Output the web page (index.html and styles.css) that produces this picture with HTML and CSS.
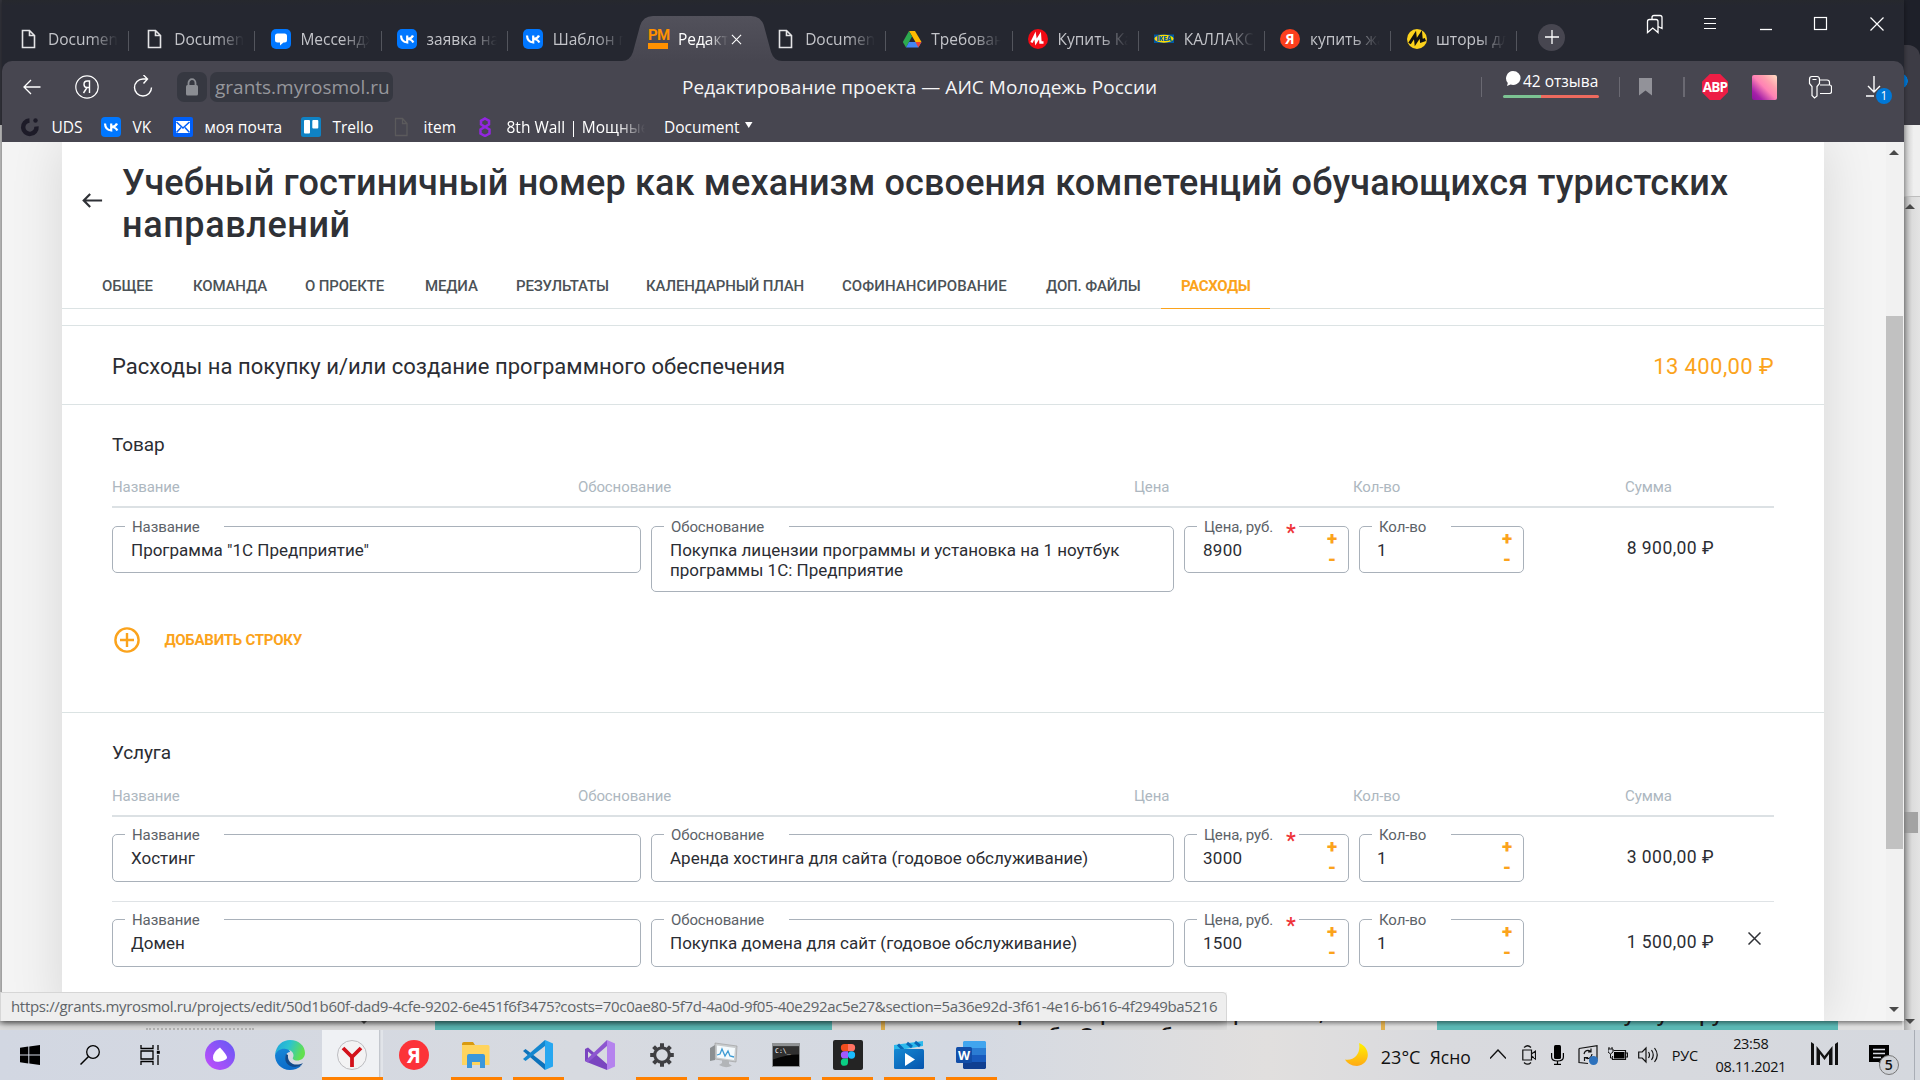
FILE: index.html
```html
<!DOCTYPE html>
<html lang="ru">
<head>
<meta charset="utf-8">
<title>Редактирование проекта — АИС Молодежь России</title>
<link rel="stylesheet" href="styles.css">
</head>
<body>
<div class="desktop">

  <div class="backwin">
    <div class="back-left"></div>
    <div class="back-tabs"></div>
    <div class="back-toolbar"></div>
    <div class="back-scroll"><i class="arrow up"></i><i class="thumb"></i><i class="arrow down"></i></div>
    <div class="back-page">
      <span class="bp-grey"></span>
      <i class="arrow down bp-arrow"></i>
      <span class="bp-teal bp-t1"></span>
      <span class="bp-card"><b class="bp-w1">р</b><b class="bp-w2">р</b><b class="bp-w3">р</b><b class="bp-x1">б</b><b class="bp-x2">З</b><b class="bp-x3">б</b><b class="bp-w4">,</b></span>
      <span class="bp-teal bp-t2"><b class="bp-y1">у</b><b class="bp-y2">у</b><b class="bp-y3">р</b><b class="bp-y4">у</b></span>
    </div>
  </div>

  <div class="window">
    <div class="tabstrip">
      <div class="tabs">
        <div class="tab doc"><svg class="ti" viewBox="0 0 20 20"><path d="M3.500 1.500h7l5 5v12h-12zM10.500 1.500v5h5" fill="none" stroke="#e4e4e6" stroke-width="1.6"/></svg><span>Document</span></div>
        <div class="tab doc"><svg class="ti" viewBox="0 0 20 20"><path d="M3.500 1.500h7l5 5v12h-12zM10.500 1.500v5h5" fill="none" stroke="#e4e4e6" stroke-width="1.6"/></svg><span>Document</span></div>
        <div class="tab"><svg class="ti" viewBox="0 0 20 20"><rect width="20" height="20" rx="5" fill="#07f"/><path d="M6.500 4.500h7q2.500 0 2.500 2.500v4q0 2.500-2.500 2.500h-1L9 16.500v-3H6.500Q4 13.500 4 11V7q0-2.500 2.500-2.500z" fill="#fff"/></svg><span>Мессенджер</span></div>
        <div class="tab"><svg class="ti" viewBox="0 0 20 20"><rect width="20" height="20" rx="5" fill="#07f"/><path d="M4 6.500q.3 6.500 6.200 7V6.500M16 6.500q-1.200 3-5.500 3.500 4.500 .3 5.800 3.500" fill="none" stroke="#fff" stroke-width="2.200"/></svg><span>заявка на грант</span></div>
        <div class="tab last"><svg class="ti" viewBox="0 0 20 20"><rect width="20" height="20" rx="5" fill="#07f"/><path d="M4 6.500q.3 6.500 6.200 7V6.500M16 6.500q-1.200 3-5.500 3.500 4.500 .3 5.800 3.500" fill="none" stroke="#fff" stroke-width="2.200"/></svg><span>Шаблон проекта</span></div>
        <div class="tab active">
          <svg class="tabshape" viewBox="0 0 160 45" preserveAspectRatio="none"><path d="M0 45Q8 45 11 36L18 10Q21 0 31 0H129Q139 0 142 10L149 36Q152 45 160 45z" fill="url(#tg)"/><defs><linearGradient id="tg" x2="0" y2="1"><stop stop-color="#52515b"/><stop offset="1" stop-color="#474650"/></linearGradient></defs></svg>
          <span class="pm"><b>РМ</b><i></i></span><span>Редактирование</span>
          <svg class="tabx" viewBox="0 0 12 12"><path d="M1 1l10 10M11 1L1 11" stroke="#fff" stroke-width="1.200"/></svg>
        </div>
        <div class="tab doc"><svg class="ti" viewBox="0 0 20 20"><path d="M3.500 1.500h7l5 5v12h-12zM10.500 1.500v5h5" fill="none" stroke="#e4e4e6" stroke-width="1.6"/></svg><span>Document</span></div>
        <div class="tab"><svg class="ti" viewBox="0 0 20 20"><path d="M7 2h6l6.500 11h-6z" fill="#ffba00"/><path d="M7 2l3 5.500L4 18.500 .8 13z" fill="#2da94f"/><path d="M7 13h12.500l-3.200 5.500H4z" fill="#4285f4"/><path d="M13.500 13h6l-3.200 5.500z" fill="#ea4335"/></svg><span>Требования</span></div>
        <div class="tab"><svg class="ti" viewBox="0 0 20 20"><circle cx="10" cy="10" r="10" fill="#f20a14"/><path d="M3.500 13.500l3.500-7 1 6.500 4-6.500.5 7h3" fill="none" stroke="#fff" stroke-width="2.400"/></svg><span>Купить Каллакс</span></div>
        <div class="tab"><svg class="ti" viewBox="0 0 20 20"><rect y="5.500" width="20" height="8.500" fill="#0058a3"/><ellipse cx="10" cy="9.750" rx="9.600" ry="3.900" fill="#ffdb00"/><text x="10" y="12.100" font-size="6.500" text-anchor="middle" class="ikea">IKEA</text></svg><span>КАЛЛАКС</span></div>
        <div class="tab"><svg class="ti" viewBox="0 0 20 20"><circle cx="10" cy="10" r="10" fill="#fc3f1d"/><text x="10" y="15" font-size="14" text-anchor="middle" class="ya">Я</text></svg><span>купить жалюзи</span></div>
        <div class="tab"><svg class="ti" viewBox="0 0 20 20"><circle cx="10" cy="10" r="10" fill="#fcd21c"/><path d="M2.500 14.500L8 6l.8 7 5-7.500.6 6.500 4-1.500" fill="none" stroke="#111" stroke-width="3"/></svg><span>шторы для</span></div>
      </div>
      <div class="newtab"><svg viewBox="0 0 14 14"><path d="M7 0v14M0 7h14" stroke="#fff" stroke-width="1.300"/></svg></div>
      <div class="winctl">
        <svg viewBox="0 0 20 20"><path d="M2.500 18.500V7.500q0-2 2-2h6.500q2 0 2 2v11l-5.250-4.500zM7 5.500V3.500q0-2 2-2h6q2 0 2 2V14.500l-4-2" fill="none" stroke="#fff" stroke-width="1.300"/></svg>
        <svg viewBox="0 0 20 20"><path d="M4 4.500h12M4 9.500h12M4 14.500h12" stroke="#fff" stroke-width="1.200"/></svg>
        <svg viewBox="0 0 20 20"><path d="M4 15.500h12" stroke="#fff" stroke-width="1.300"/></svg>
        <svg viewBox="0 0 20 20"><rect x="3.500" y="3.500" width="12" height="12" fill="none" stroke="#fff" stroke-width="1.200"/></svg>
        <svg viewBox="0 0 20 20"><path d="M3.500 3.500l13 13M16.500 3.500l-13 13" stroke="#fff" stroke-width="1.200"/></svg>
      </div>
    </div>

    <div class="toolbar">
      <div class="navbar">
        <div class="navicons">
          <svg viewBox="0 0 24 24"><path d="M20.500 12H4M11 5l-7 7 7 7" fill="none" stroke="#fff" stroke-width="1.300"/></svg>
          <svg viewBox="0 0 24 24"><circle cx="12" cy="12" r="11.200" fill="none" stroke="#fff" stroke-width="1.200"/><path d="M14.500 18V6h-2.300Q9 6 9 9.200t3 3.300h2.500M12 12.500L8.500 18" fill="none" stroke="#fff" stroke-width="1.400"/></svg>
          <svg viewBox="0 0 24 24"><path d="M20.500 12.500A8.500 8.500 0 1 1 12 4h4M12.500 0L16.500 4l-4 4.500" fill="none" stroke="#fff" stroke-width="1.400"/></svg>
        </div>
        <div class="lock"><svg viewBox="0 0 14 18"><rect x="1" y="7" width="12" height="10.500" rx="1.500" fill="#8b8d93"/><path d="M3.500 8V5a3.500 3.800 0 0 1 7 0v3" fill="none" stroke="#8b8d93" stroke-width="1.800"/></svg></div>
        <div class="url"><span>grants.myrosmol.ru</span></div>
        <div class="pagetitle"><span>Редактирование проекта — АИС Молодежь России</span></div>
        <i class="vsep"></i>
        <div class="reviews"><div><svg viewBox="0 0 16 16"><path d="M8 0a7.500 7 0 1 1-2.500 13.600L2 15l.8-3A7.300 7.300 0 0 1 8 0z" fill="#fff"/></svg><span>42 отзыва</span></div><i></i></div>
        <i class="vsep"></i>
        <svg class="bm" viewBox="0 0 14 18"><path d="M0 0h13v17.500L6.500 12.500 0 17.500z" fill="#929299"/></svg>
        <i class="vsep v3"></i>
        <svg class="abp" viewBox="0 0 26 26"><path d="M7.800 0h10.400L26 7.800v10.400L18.200 26H7.800L0 18.200V7.800z" fill="#ed1e45"/><text x="13" y="17.700" text-anchor="middle">ABP</text></svg>
        <div class="pix"></div>
        <svg class="key" viewBox="0 0 24 24"><path d="M4 1.500h5q2.500 0 2.500 3v4l-2.500 3v9.500L6.500 23 4 20.500v-9L1.500 8.500v-4q0-3 2.500-3zM4.500 4.500h4M12 5h7q2.500 0 2.500 2.500V10q2 0 2 2v4.500q0 2-2 2H12M12 10h9.500" fill="none" stroke="#fff" stroke-width="1.200"/></svg>
        <div class="dl"><svg viewBox="0 0 16 22"><path d="M8 0v16M2 10l6 6 6-6M0 20h8" fill="none" stroke="#fff" stroke-width="1.400"/></svg><b>1</b></div>
      </div>
      <div class="bookmarks">
        <div class="bk b1"><svg viewBox="0 0 20 20"><path d="M9.500 3.500a6.700 6.700 0 1 0 7 6" fill="none" stroke="#1d1b28" stroke-width="4.500"/><circle cx="15.500" cy="3.500" r="2.200" fill="#1d1b28"/></svg><span>UDS</span></div>
        <div class="bk b2"><svg viewBox="0 0 20 20"><rect width="20" height="20" rx="4" fill="#07f"/><path d="M4 6.500q.3 6.500 6.200 7V6.500M16 6.500q-1.200 3-5.500 3.500 4.500 .3 5.800 3.500" fill="none" stroke="#fff" stroke-width="2.200"/></svg><span>VK</span></div>
        <div class="bk b3"><svg viewBox="0 0 20 20"><rect width="20" height="20" rx="2" fill="#005ff9"/><rect x="3" y="4" width="14" height="12" fill="#fff"/><path d="M3.500 5l6.500 6 6.500-6M3.500 15.500L8 10.500M16.500 15.500L12 10.500" fill="none" stroke="#005ff9" stroke-width="1.500"/></svg><span>моя почта</span></div>
        <div class="bk b4"><svg viewBox="0 0 20 20"><rect width="20" height="20" rx="2.500" fill="#0f82c4"/><rect x="3" y="3" width="6" height="13.500" rx="1" fill="#fff"/><rect x="11.300" y="3" width="6" height="8.500" rx="1" fill="#fff"/></svg><span>Trello</span></div>
        <div class="bk b5"><svg viewBox="0 0 20 20"><path d="M3.500 1.500h7l4.500 5v12H3.500zM10.500 1.500v5h5" fill="none" stroke="#5b5a5c" stroke-width="1.300"/></svg><span>item</span></div>
        <div class="bk b6"><svg viewBox="0 0 20 20"><path d="M10 1.500l4 2.300v3.500L10 10 6 7.300V3.800zM10 10l4.500 2.500v4L10 19l-4.500-2.500v-4z" fill="none" stroke="#9226e0" stroke-width="2.500"/></svg><span>8th Wall | Мощные</span></div>
        <div class="bk b7"><span>Document</span><svg class="tri" viewBox="0 0 8 6"><path d="M0 0h7.500L3.750 6z" fill="#fff"/></svg></div>
      </div>
    </div>

    <div class="viewport">
      <div class="page">
        <header class="head">
          <svg viewBox="0 0 24 16"><path d="M23 8H3M10 1L3 8l7 7" fill="none" stroke="#2f3136" stroke-width="2.400"/></svg>
          <h1><span>Учебный гостиничный номер как механизм освоения компетенций обучающихся туристских</span><br><span>направлений</span></h1>
        </header>
        <nav class="sections">
          <a class="s1">ОБЩЕЕ</a><a class="s2">КОМАНДА</a><a class="s3">О ПРОЕКТЕ</a><a class="s4">МЕДИА</a><a class="s5">РЕЗУЛЬТАТЫ</a><a class="s6">КАЛЕНДАРНЫЙ ПЛАН</a><a class="s7">СОФИНАНСИРОВАНИЕ</a><a class="s8">ДОП. ФАЙЛЫ</a><a class="s9 on">РАСХОДЫ</a>
        </nav>
        <div class="total"><h2>Расходы на покупку и/или создание программного обеспечения</h2><span>13 400,00 ₽</span></div>

        <section class="group first">
          <h3>Товар</h3>
          <div class="cols"><span>Название</span><span>Обоснование</span><span>Цена</span><span>Кол-во</span><span>Сумма</span></div>
          <div class="row">
            <div class="field"><label>Название</label><p>Программа "1С Предприятие"</p></div>
            <div class="field tall"><label>Обоснование</label><p>Покупка лицензии программы и установка на 1 ноутбук<br>программы 1С: Предприятие</p></div>
            <div class="field num"><label>Цена, руб.<em>*</em></label><p>8900</p><i class="pm-ctl"><b>+</b><b>-</b></i></div>
            <div class="field num qty"><label>Кол-во</label><p>1</p><i class="pm-ctl"><b>+</b><b>-</b></i></div>
            <div class="sum">8 900,00 ₽</div>
          </div>
          <div class="add"><svg viewBox="0 0 26 26"><circle cx="13" cy="13" r="11.600" fill="none" stroke="#fba31c" stroke-width="2.400"/><path d="M13 6v14M6 13h14" stroke="#fba31c" stroke-width="2.400"/></svg><span>ДОБАВИТЬ СТРОКУ</span></div>
        </section>

        <section class="group second">
          <h3>Услуга</h3>
          <div class="cols"><span>Название</span><span>Обоснование</span><span>Цена</span><span>Кол-во</span><span>Сумма</span></div>
          <div class="row">
            <div class="field"><label>Название</label><p>Хостинг</p></div>
            <div class="field"><label>Обоснование</label><p>Аренда хостинга для сайта (годовое обслуживание)</p></div>
            <div class="field num"><label>Цена, руб.<em>*</em></label><p>3000</p><i class="pm-ctl"><b>+</b><b>-</b></i></div>
            <div class="field num qty"><label>Кол-во</label><p>1</p><i class="pm-ctl"><b>+</b><b>-</b></i></div>
            <div class="sum">3 000,00 ₽</div>
          </div>
          <div class="row next">
            <div class="field"><label>Название</label><p>Домен</p></div>
            <div class="field"><label>Обоснование</label><p>Покупка домена для сайт (годовое обслуживание)</p></div>
            <div class="field num"><label>Цена, руб.<em>*</em></label><p>1500</p><i class="pm-ctl"><b>+</b><b>-</b></i></div>
            <div class="field num qty"><label>Кол-во</label><p>1</p><i class="pm-ctl"><b>+</b><b>-</b></i></div>
            <div class="sum">1 500,00 ₽</div>
            <svg class="del" viewBox="0 0 13 13"><path d="M.5 .5l12 12M12.500 .5l-12 12" stroke="#2f3136" stroke-width="1.500"/></svg>
          </div>
        </section>
      </div>
      <div class="scrollbar"><i class="arrow up"></i><i class="thumb"></i><i class="arrow down"></i></div>
    </div>
  </div>

  <div class="status"><span>https://grants.myrosmol.ru/projects/edit/50d1b60f-dad9-4cfe-9202-6e451f6f3475?costs=70c0ae80-5f7d-4a0d-9f05-40e292ac5e27&amp;section=5a36e92d-3f61-4e16-b616-4f2949ba5216</span></div>

  <div class="taskbar">
    <div class="tb sys"><svg width="20" height="20" viewBox="0 0 20 20"><path d="M0 2.800L8.300 1.600v7.900H0zM9.300 1.500L20 0v9.500H9.300zM0 10.500h8.300v7.900L0 17.200zM9.300 10.500H20V20L9.300 18.500z"/></svg></div>
    <div class="tb sys"><svg width="20" height="20" viewBox="0 0 20 20"><circle cx="13" cy="7" r="6.300" fill="none" stroke="#000" stroke-width="1.300"/><path d="M8.500 11.500L.5 19.500" stroke="#000" stroke-width="1.500"/></svg></div>
    <div class="tb sys"><svg width="20" height="20" viewBox="0 0 20 20"><path d="M1 0v3.500h12V0M1 20v-3.500h12V20M1 6h12v8H1zM18 0v5M18 10v10" fill="none" stroke="#000" stroke-width="1.300"/><rect x="16.800" y="5.800" width="3" height="3"/></svg></div>
    <div class="tb alice"><svg width="30" height="30" viewBox="0 0 30 30"><defs><linearGradient id="al" x1="0" y1="1" x2="1" y2="0"><stop stop-color="#c54dfb"/><stop offset="1" stop-color="#6259f5"/></linearGradient></defs><circle cx="15" cy="15" r="15" fill="url(#al)"/><path d="M15 7.500Q22 15 22 17.500T15 21.500 8 17.500 15 7.500z" fill="#fff"/></svg></div>
    <div class="tb edge"><svg width="30" height="30" viewBox="0 0 30 30"><defs><linearGradient id="e1" x1="0" x2="1" y2=".3"><stop stop-color="#1fa2dd"/><stop offset=".5" stop-color="#2cc3d0"/><stop offset="1" stop-color="#62e050"/></linearGradient><linearGradient id="e2" x2=".3" y2="1"><stop stop-color="#1887d8"/><stop offset="1" stop-color="#0b6cc9"/></linearGradient></defs><path d="M0 15C1 5 8 0 15 0c9 0 15 6 15 13 0 5-4 7.500-8 7.500-3 0-5-1.500-4-3 1.500-2.500 0-7-5-7.500C8 9.500 2 11 0 15z" fill="url(#e1)"/><path d="M0 15c2-5 7-7 11-6 3 .5 4 2 4 3-4 0-6 6-3 10s9 6 15 3c-4 4-8 5-12 5C6 30 0 23 0 15z" fill="url(#e2)"/><path d="M11 14c-3 7 2 13 9 13 3 0 6-1 8-4-8 4-16 0-15-8z" fill="#114a8b"/></svg></div>
    <div class="tb on run"><svg width="30" height="30" viewBox="0 0 30 30"><circle cx="15" cy="15" r="14.500" fill="#f3f3f4" stroke="#bcbcc0"/><path d="M6 8l9 9v10M24 8l-9 9" fill="none" stroke="#d3121b" stroke-width="3.800"/></svg></div>
    <div class="tb"><svg width="30" height="30" viewBox="0 0 30 30"><circle cx="15" cy="15" r="15" fill="#fc3338"/><text x="15" y="22.500" font-size="21" text-anchor="middle" class="ya">Я</text></svg></div>
    <div class="tb run"><svg width="28" height="26" viewBox="0 0 28 26"><path d="M0 2q0-2 2-2h9l2 3h-13z" fill="#d99a10"/><path d="M0 3h26q1.500 0 1.500 1.500V23H0z" fill="#ffd45e"/><path d="M5 26V14q0-2 2-2h14q2 0 2 2v12h-5v-6h-8v6z" fill="#3a97dc"/></svg></div>
    <div class="tb run"><svg width="30" height="30" viewBox="0 0 30 30"><path d="M0 11l2.500-2L22 24v6L0 11z" fill="#0d72ba"/><path d="M0 19l2.500 2L22 6V0z" fill="#1487cf"/><path d="M22 0l8 3.500v23L22 30z" fill="#27a7f0"/></svg></div>
    <div class="tb"><svg width="30" height="30" viewBox="0 0 30 30"><path d="M0 9l3-1.500L22 24v6L3 22.500 0 21zM3 11.500v7L7 15z" fill="#7a45c0" fill-rule="evenodd"/><path d="M22 0v6L3 22.500 0 21 22 0z" fill="#8d56d0"/><path d="M22 0l8 3.500v23L22 30z" fill="#b583ee"/></svg></div>
    <div class="tb run"><svg width="24" height="24" viewBox="-12 -12 24 24"><circle r="7.300" fill="none" stroke="#3f3f42" stroke-width="3"/><g stroke="#3f3f42" stroke-width="4"><path d="M0-8v-3.800M0 8v3.800M8 0h3.800M-8 0h-3.800M5.700-5.700l2.700-2.700M-5.700 5.700l-2.700 2.700M5.700 5.700l2.700 2.700M-5.700-5.700l-2.700-2.700"/></g></svg></div>
    <div class="tb run"><svg width="28" height="26" viewBox="0 0 28 26"><path d="M0 6l5-3v15l-5 1z" fill="#8b8f92"/><path d="M5 1l22 3-1 16L5 17z" fill="#c9ccce" stroke="#999" stroke-width=".6"/><path d="M7 3.500l18 2.500-1 12L7 15.500z" fill="#f4fafd"/><path d="M7 13l3-1 2-5 3 7 3-5 2 5 4 1" fill="none" stroke="#3c9bd4" stroke-width="1.300"/><path d="M12 18l7 1v3l3 1.500q-6 3.500-13-.5l3-2z" fill="#b2b5b8"/></svg></div>
    <div class="tb run"><svg width="28" height="24" viewBox="0 0 28 24"><rect width="28" height="24" fill="#8f9294"/><rect x="1" y="3.500" width="26" height="19.500" fill="#050505"/><path d="M1 3.500h26v8q-12 0-26 5z" fill="#303030"/><text x="3" y="9.500" font-size="6.500" class="cmd">C:\_</text></svg></div>
    <div class="tb run"><svg width="30" height="30" viewBox="0 0 30 30"><rect width="30" height="30" rx="2" fill="#242424"/><path d="M15 4h-3.500a3.600 3.600 0 0 0 0 7.300H15z" fill="#f24e1e"/><path d="M15 4h3.500a3.600 3.600 0 0 1 0 7.300H15z" fill="#ff7262"/><path d="M15 11.300h-3.500a3.600 3.600 0 0 0 0 7.300H15z" fill="#a259ff"/><circle cx="18.500" cy="15" r="3.650" fill="#1abcfe"/><path d="M15 18.600h-3.500a3.600 3.600 0 1 0 3.500 3.600z" fill="#0acf83"/></svg></div>
    <div class="tb run"><svg width="30" height="30" viewBox="0 0 30 30"><defs><linearGradient id="mv" x2="1" y2="1"><stop stop-color="#1489d3"/><stop offset="1" stop-color="#0754ad"/></linearGradient></defs><path d="M0 5L29 1v5L0 11z" fill="#2cb9ec"/><path d="M4 4.500l5 5M13 3l5 4M21 2l5 4" stroke="#0869b7" stroke-width="3"/><rect y="9" width="30" height="20" rx="1.500" fill="url(#mv)"/><path d="M11 13v13l10-6.500z" fill="#fff"/></svg></div>
    <div class="tb run"><svg width="30" height="28" viewBox="0 0 30 28"><path d="M8 0h21l1 1v6H7V1z" fill="#41a5ee"/><path d="M7 7h23v7H7z" fill="#2b7cd3"/><path d="M7 14h23v7H7z" fill="#185abd"/><path d="M7 21h23v6l-1 1H8l-1-1z" fill="#103f91"/><rect y="6" width="16" height="16" rx="1.500" fill="#124ea8"/><text x="8" y="18.500" font-size="12.500" text-anchor="middle" class="ya">W</text></svg></div>

    <div class="tray">
      <svg class="moon" viewBox="0 0 23 23"><defs><linearGradient id="mo" x2="0" y2="1"><stop stop-color="#fff200"/><stop offset="1" stop-color="#ffa915"/></linearGradient></defs><path d="M14 0C27 5 25 22 12 23 6 23 2 20 0 16.500 10 18 16 10 14 0z" fill="url(#mo)"/></svg>
      <span class="temp">23°C</span><span class="sky">Ясно</span>
      <svg class="chev" viewBox="0 0 16 10"><path d="M0 9.500L8 1l8 8.500" fill="none" stroke="#111" stroke-width="1.400"/></svg>
      <svg class="cam" viewBox="0 0 14 20"><path d="M2 2.500Q5.500-1 9 2.500M2 17.500q3.500 3.500 7 0M.8 5h8.700v10H.8zM9.500 9l4-3v8l-4-3" fill="none" stroke="#111" stroke-width="1.200"/></svg>
      <svg class="mic" viewBox="0 0 13 20"><rect x="3" width="7" height="14" rx="1.500"/><path d="M.6 8v4q0 4 5.900 4t5.900-4V8M6.500 16v3M3 19.400h7" fill="none" stroke="#000" stroke-width="1.200"/></svg>
      <svg class="sync" viewBox="0 0 20 20"><path d="M1 3.500L19 .7v14M1 3.500v14l9 1" fill="none" stroke="#111" stroke-width="1.200"/><path d="M6 9q1-4 5-3.500l2 1M13 3.500v3.300h-3M14 9q-1 5-5 4.500l-2-1M6.500 16v-3.500H10" fill="none" stroke="#111" stroke-width="1.200"/><circle cx="15.500" cy="15.500" r="4.500" fill="#2d72bd"/></svg>
      <svg class="bat" viewBox="0 0 20 14"><path d="M5.500 3.500h12v9h-13V9M17.500 6H19.500v4h-2" fill="none" stroke="#111" stroke-width="1.200"/><rect x="6" y="5" width="10.500" height="6.500"/><path d="M1 0v2M4 0v2M0 2h5v3L2.500 7 0 5zM2.500 7v4h2" fill="#d5d8e0" stroke="#111"/></svg>
      <svg class="spk" viewBox="0 0 21 18"><path d="M.7 6h3.500L8 2v14l-3.800-4H.7zM10.500 6q2 3 0 6M13.500 4q3.500 5 0 10M16.500 2q5.500 7 0 14" fill="none" stroke="#111" stroke-width="1.200"/></svg>
      <span class="lang">РУС</span>
      <div class="clock"><span>23:58</span><span>08.11.2021</span></div>
      <svg class="mm" viewBox="0 0 27 23"><path d="M0 0l3 2v21H0zM27 0l-3 2v21h3zM5.500 4L13.500 14 21.500 4v19h-3.500V12L13.500 18 9 12v11H5.500z" fill="#111"/></svg>
      <div class="notif"><svg viewBox="0 0 20 22"><path d="M0 0h20v17h-6v4.500L9.500 17H0z"/><path d="M4 4.500h12M4 8.500h12M4 12.500h8" stroke="#d5d8e0" stroke-width="1.400"/></svg><b>5</b></div>
    </div>
    <i class="peek"></i>
  </div>
</div>
</body>
</html>
```
FILE: styles.css
```css
* { box-sizing: border-box; }
body { margin: 0; background: #d5d8e0; }
.desktop { position: relative; width: 1920px; height: 1080px; overflow: hidden; font-family: "Open Sans", "Noto Sans", sans-serif; }
svg { display: block; flex: none; }
i { font-style: normal; }
h1, h2, h3, p { margin: 0; font-weight: 400; }

/* window that lies behind the main one */
.backwin { position: absolute; inset: 0 0 50px 0; background: #e2e2e2; }
.back-left { position: absolute; left: 0; top: 0; width: 2px; height: 1030px; background: linear-gradient(#34353d 125px, #c8c8c8 125px); }
.back-tabs { position: absolute; right: 0; top: 0; width: 30px; height: 60px; background: #1e2029; }
.back-toolbar { position: absolute; right: 0; top: 45px; width: 16px; height: 80px; background: radial-gradient(circle 8px at -4px 36px, #0078d7 7.500px, transparent 8px), #3d3c45; border-radius: 0 12px 0 0; }
.back-scroll { position: absolute; right: 0; top: 125px; width: 16px; height: 905px; background: linear-gradient(90deg, #a8a8a8, #dcdcdc 50%, #e4e4e4); }
.back-scroll::before { content: ""; display: block; height: 71px; background: linear-gradient(90deg, #c4c4c4, #efefef 60%); border-bottom: 1px solid #bdbdbd; }
.back-scroll .thumb { position: absolute; left: 0; top: 687px; width: 14px; height: 21px; background: #a3a3a3; }
.arrow { position: absolute; width: 0; height: 0; border: 5px solid transparent; }
.arrow.up { border-top: 0; border-bottom-color: #4a4a4a; }
.arrow.down { border-bottom: 0; border-top-color: #4a4a4a; }
.back-scroll .up { left: 1px; top: 79px; }
.back-scroll .down { left: 1px; bottom: 6px; }
.back-page { position: absolute; left: 0; top: 1021px; width: 1902px; height: 9px; overflow: hidden; background: linear-gradient(#bcbcbc, #dedede 60%); font: 20px/22px "Open Sans", sans-serif; }
.back-page span { position: absolute; top: 0; height: 9px; overflow: hidden; }
.back-page b { position: absolute; color: #1c1c1c; font-weight: 600; }
.bp-arrow { left: 359px; top: -2px; }
.bp-grey { left: 146px; top: 7px !important; width: 108px; border-top: 2px dotted #b5b5b5; }
.bp-teal { background: linear-gradient(#4c9f9c, #5bb8b4 60%); }
.bp-t1 { left: 435px; width: 397px; }
.bp-t2 { left: 1437px; width: 401px; }
.bp-card { left: 881px; width: 504px; border: solid #e0b04f; border-width: 0 4px; }
.bp-w1, .bp-w2, .bp-w3, .bp-w4 { top: -19px; }
.bp-w1 { left: 132px; } .bp-w2 { left: 215px; } .bp-w3 { left: 348px; } .bp-w4 { left: 434px; }
.bp-x1, .bp-x2, .bp-x3 { top: 3px; }
.bp-x1 { left: 163px; } .bp-x2 { left: 196px; } .bp-x3 { left: 275px; }
.bp-y1, .bp-y2, .bp-y3, .bp-y4 { top: -18px; }
.bp-y1 { left: 187px; } .bp-y2 { left: 220px; } .bp-y3 { left: 262px; } .bp-y4 { left: 275px; }

/* browser window */
.window { position: absolute; left: 2px; top: 0; width: 1902px; height: 1021px; display: flex; flex-direction: column; background: #252730; box-shadow: 0 1px 5px rgba(0,0,0,.45); }
.tabstrip { height: 61px; display: flex; background: linear-gradient(#26282d, #252730 6px); }
.tabs { display: flex; padding-left: 1px; height: 61px; }
.tab { position: relative; width: 126.200px; height: 61px; display: flex; align-items: center; padding: 17px 0 0 15.500px; color: #c3c4c9; font-size: 15.500px; line-height: 20px; }
.tab::after { content: ""; position: absolute; right: 0; top: 31px; width: 1px; height: 20px; background: #53555d; }
.tab.last::after, .tab.active::after { display: none; }
.ti { width: 20px; height: 20px; margin-right: 9.500px; }
.tab > span:not(.pm) { width: 70px; overflow: hidden; white-space: nowrap; -webkit-mask-image: linear-gradient(90deg, #000 60%, transparent); mask-image: linear-gradient(90deg, #000 60%, transparent); }
.tab.active { color: #fff; z-index: 1; padding-left: 14px; }
.tab.active > span:not(.pm) { width: 50px; position: relative; }
.tabshape { position: absolute; left: -12px; top: 16px; width: 160px; height: 45px; }
.pm { position: relative; width: 20px; height: 20px; margin-right: 10px; }
.pm b { display: block; height: 12px; font: 700 15px/12px Roboto, sans-serif; color: #ff9100; letter-spacing: -.5px; }
.pm i { display: block; height: 6px; margin-top: 2px; background: #ff9100; }
.tabx { position: relative; width: 11px; height: 11px; margin-left: 3px; }
.ikea { font: 900 6.500px "Open Sans"; fill: #0058a3; }
.ya { font-family: "Open Sans"; font-weight: 700; fill: #fff; }
.cmd { font-family: "DejaVu Sans Mono"; fill: #fff; }
.newtab { width: 27px; height: 27px; margin: 23.500px 0 0 21px; border-radius: 50%; background: #474650; display: grid; place-items: center; }
.newtab svg { width: 14px; height: 14px; }
.winctl { display: flex; gap: 35.500px; margin: 14px 0 0 auto; padding-right: 17.500px; }
.winctl svg { width: 20px; height: 20px; }

.toolbar { height: 81px; background: #474650; border-radius: 10px 10px 0 0; }
.navbar { height: 52px; display: flex; align-items: center; }
.navicons { display: flex; gap: 31.500px; width: 175px; padding-left: 17.500px; }
.navicons svg { width: 24px; height: 24px; }
.lock, .url { height: 30px; border-radius: 7px; background: #363841; display: flex; align-items: center; }
.lock { width: 30px; justify-content: center; margin-right: 3px; }
.lock svg { width: 14px; height: 18px; }
.url { width: 183px; padding-left: 5px; color: #96979c; font-size: 19px; line-height: 26px; }
.pagetitle { width: 1088px; padding-left: 289px; color: #f5f5f6; font-size: 19px; line-height: 26px; letter-spacing: .04px; white-space: nowrap; }
.vsep { width: 1px; height: 20px; background: #6a6972; }
.v3 { width: 2px; }
.reviews { width: 96px; margin: -5px 20px 0 21px; color: #fff; font-size: 15.500px; line-height: 20px; }
.reviews div { display: flex; white-space: nowrap; padding-left: 2px; height: 24px; }
.reviews svg { width: 16px; height: 16px; margin-right: 2px; }
.reviews i { display: block; height: 3px; border-radius: 2px; background: linear-gradient(90deg, #7cc393 40%, #ed6a5e 40%); }
.bm { width: 14px; height: 18px; margin: 0 30px 0 19px; }
.abp { width: 26px; height: 26px; margin-left: 16.500px; }
.abp text { font: 700 13.500px "Open Sans"; fill: #fff; letter-spacing: -.8px; }
.pix { width: 25px; height: 25px; margin-left: 24px; border-radius: 2px; background: linear-gradient(225deg, #ffe0c4, #ff9fae 30%, #ff82b5 50%, #a521a8 80%, #8a159c); }
.key { width: 24px; height: 24px; margin-left: 31px; }
.dl { position: relative; margin-left: 34.500px; }
.dl svg { width: 16px; height: 22px; }
.dl b { position: absolute; left: 10px; top: 12px; width: 16px; height: 16px; border-radius: 50%; background: #0078d7; color: #fff; font: 12px/16px "Open Sans"; text-align: center; }
.bookmarks { height: 29px; display: flex; padding: 4px 0 0 18px; color: #fff; font-size: 15.500px; line-height: 20px; white-space: nowrap; }
.bk { display: flex; height: 20px; }
.bk svg { width: 20px; height: 20px; margin-right: 11.500px; }
.b1 { width: 81px; } .b2 { width: 72px; } .b3 { width: 128px; } .b4 { width: 91px; } .b5 { width: 83px; } .b6 { width: 189px; }
.b6 span { width: 138px; overflow: hidden; -webkit-mask-image: linear-gradient(90deg, #000 80%, transparent); mask-image: linear-gradient(90deg, #000 80%, transparent); }
.bk svg.tri { width: 8px; height: 6px; margin: 5px 0 0 5px; }

/* page */
.viewport { flex: 1; min-height: 0; display: flex; background: #f4f4f4; overflow: hidden; }
.page { position: relative; margin-left: 60px; width: 1762px; background: #fff; color: #2b2d33; box-shadow: 0 0 50px rgba(0,0,0,.12); font-family: Roboto, "Liberation Sans", sans-serif; }
.scrollbar { position: relative; margin-left: auto; width: 18px; background: #f1f1f1; }
.scrollbar .thumb { position: absolute; left: 0; top: 174px; width: 17px; height: 533px; background: #c1c1c1; }
.scrollbar .up { left: 3px; top: 8px; }
.scrollbar .down { left: 3px; bottom: 9px; }
.head { display: flex; height: 119px; padding: 20px 0 0 19px; }
.head svg { width: 22px; height: 15px; margin: 31px 19px 0 0; }
h1 { font-size: 36px; line-height: 42px; font-weight: 500; color: #2f3136; letter-spacing: .15px; white-space: nowrap; }
h1 span + br + span { letter-spacing: .6px; }
.sections { display: flex; height: 48px; padding-left: 20px; border-bottom: 1px solid #dce3e4; font-size: 15px; line-height: 20px; font-weight: 500; color: #4b5257; letter-spacing: -.15px; white-space: nowrap; }
.sections a { height: 48px; padding: 15px 0 0 20px; }
.s1 { width: 91px; } .s2 { width: 112px; } .s3 { width: 120px; } .s4 { width: 91px; } .s5 { width: 130px; } .s6 { width: 196px; } .s7 { width: 204px; letter-spacing: .08px; } .s8 { width: 135px; } .s9 { width: 109px; }
.sections .on { color: #fba31c; border-bottom: 1px solid #fba31c; font-weight: 700; letter-spacing: -.35px; }
.total { display: flex; justify-content: space-between; margin-top: 16px; height: 80px; padding: 26px 50px 0; border: solid #dce3e4; border-width: 1px 0; font-size: 22px; line-height: 30px; white-space: nowrap; }
.total h2 { font-size: 22px; letter-spacing: .03px; }
.total span { color: #fba31c; letter-spacing: .4px; }
.group { padding: 0 50px; height: 308px; border-bottom: 1px solid #dbe3e3; }
.group h3 { padding-top: 28px; height: 71px; font-size: 19px; line-height: 24px; letter-spacing: -.1px; }
.first h3 { height: 70px; }
.cols { display: grid; grid-template-columns: 466px 556px 219px 272px 1fr; height: 33px; padding-top: 2px; border-bottom: 2px solid #dce1e4; color: #adb7c0; font-size: 15px; line-height: 20px; letter-spacing: -.1px; }
.row { display: flex; align-items: flex-start; padding-top: 18px; height: 85px; }
.field { position: relative; width: 529px; height: 48px; border: 1px solid #a9b1ba; border-radius: 5px; margin-right: 10px; }
.first .field { height: 47px; }
.field + .field { width: 523px; }
.first .field.tall { height: 66px; }
.field + .num { width: 165px; margin-right: 10px; }
.field label { position: absolute; left: 12px; top: -10px; height: 20px; width: 99px; padding-left: 7px; background: #fff; color: #5c6268; font-size: 15px; line-height: 20px; letter-spacing: -.1px; white-space: nowrap; }
.field + .field label { width: 125px; }
.field + .num label { width: 102px; }
.field + .qty label { width: 79px; }
.field em { position: absolute; left: 89px; top: 5px; font: 500 22px/22px Roboto; color: #ee3338; }
.field p { padding: 13px 0 0 18px; font-size: 17px; line-height: 20px; white-space: nowrap; }
.num p { letter-spacing: .3px; }
.qty p { padding-left: 17px; }
.pm-ctl { position: absolute; right: 9px; top: 1px; width: 14px; color: #fba31c; font: 700 19px/21px Roboto; text-align: center; }
.pm-ctl b { display: block; }
.sum { width: 180px; padding-top: 12px; text-align: right; font-size: 17.500px; line-height: 20px; letter-spacing: .45px; white-space: nowrap; }
.second .sum { padding-top: 13px; }
.add { display: flex; align-items: center; margin-top: 34px; gap: 25px; height: 26px; padding-left: 1.500px; color: #fba31c; font-size: 15px; font-weight: 700; letter-spacing: -.25px; }
.add svg { width: 26px; height: 26px; }
.second { border: 0; }
.next { border-top: 1px solid #dfe3e6; padding-top: 17px; }
.second .row:not(.next) { height: 84px; padding-top: 17px; }
.del { width: 13px; height: 13px; margin: 13px 0 0 34px; }

.status { position: absolute; left: 0; top: 992px; width: 1227px; height: 29px; background: #eee; border: 1px solid #d6d6d6; border-bottom: 0; border-radius: 0 5px 0 0; box-shadow: 0 3px 8px rgba(0,0,0,.3); clip-path: inset(0 0 -9px 0); padding-left: 10px; color: #606468; font-size: 15px; letter-spacing: -.33px; line-height: 27px; white-space: nowrap; }

/* taskbar */
.taskbar { position: absolute; left: 0; bottom: 0; width: 1920px; height: 50px; display: flex; background: linear-gradient(90deg, #d2d7e2, #d7dae0 30%, #d4d9e2 50%, #e1dfde 66%, #d9dade 75%, #d5d8de 100%); }
.tb { width: 61.900px; height: 50px; display: grid; place-items: center; position: relative; }
.sys { width: 60px; }
.alice { width: 70px; margin-left: 5px; }
.edge { width: 66.500px; padding-left: 3px; }
.on.tb { background: linear-gradient(90deg, #eff1f4 57px, #b9bdc4 57px, #e1e4e9 59px); }
.run::after { content: ""; position: absolute; left: 5.500px; right: 5.500px; bottom: 0; height: 3px; background: #ff8000; }
.on.run::after { left: 0; right: 0; }
.tray { display: flex; margin-left: 342.500px; color: #111; }
.tray > * { margin-top: 15px; }
.tray .moon { width: 23px; height: 23px; margin: 13px 13px 0 0; }
.temp { width: 49px; font-size: 18px; line-height: 24px; }
.sky { width: 60px; font-size: 17.500px; line-height: 24px; }
.tray .chev { width: 16px; height: 10px; margin: 19px 16px 0 0; }
.tray .cam { width: 14px; height: 20px; margin-right: 15px; }
.tray .mic { width: 13px; height: 20px; margin-right: 14px; }
.tray .sync { width: 20px; height: 20px; margin-right: 10px; }
.tray .bat { width: 20px; height: 14px; margin: 17px 10px 0 0; }
.tray .spk { width: 21px; height: 18px; margin: 16px 13px 0 0; }
.lang { width: 35px; font-size: 14.500px; line-height: 22px; letter-spacing: -.3px; }
.tray .clock { width: 88px; margin-top: 2px; display: flex; flex-direction: column; align-items: center; font-size: 14.500px; line-height: 23px; letter-spacing: -.35px; }
.tray .mm { width: 27px; height: 23px; margin: 12px 31px 0 16px; }
.notif { position: relative; }
.notif svg { width: 20px; height: 22px; }
.notif b { position: absolute; left: 10px; top: 10px; width: 20px; height: 20px; border: 1px solid #777; border-radius: 50%; background: #cfd2d7; font: 600 14px/18px "Open Sans"; text-align: center; }
.peek { position: absolute; right: 5px; top: 0; width: 1px; height: 50px; background: #a9adb5; }
```
